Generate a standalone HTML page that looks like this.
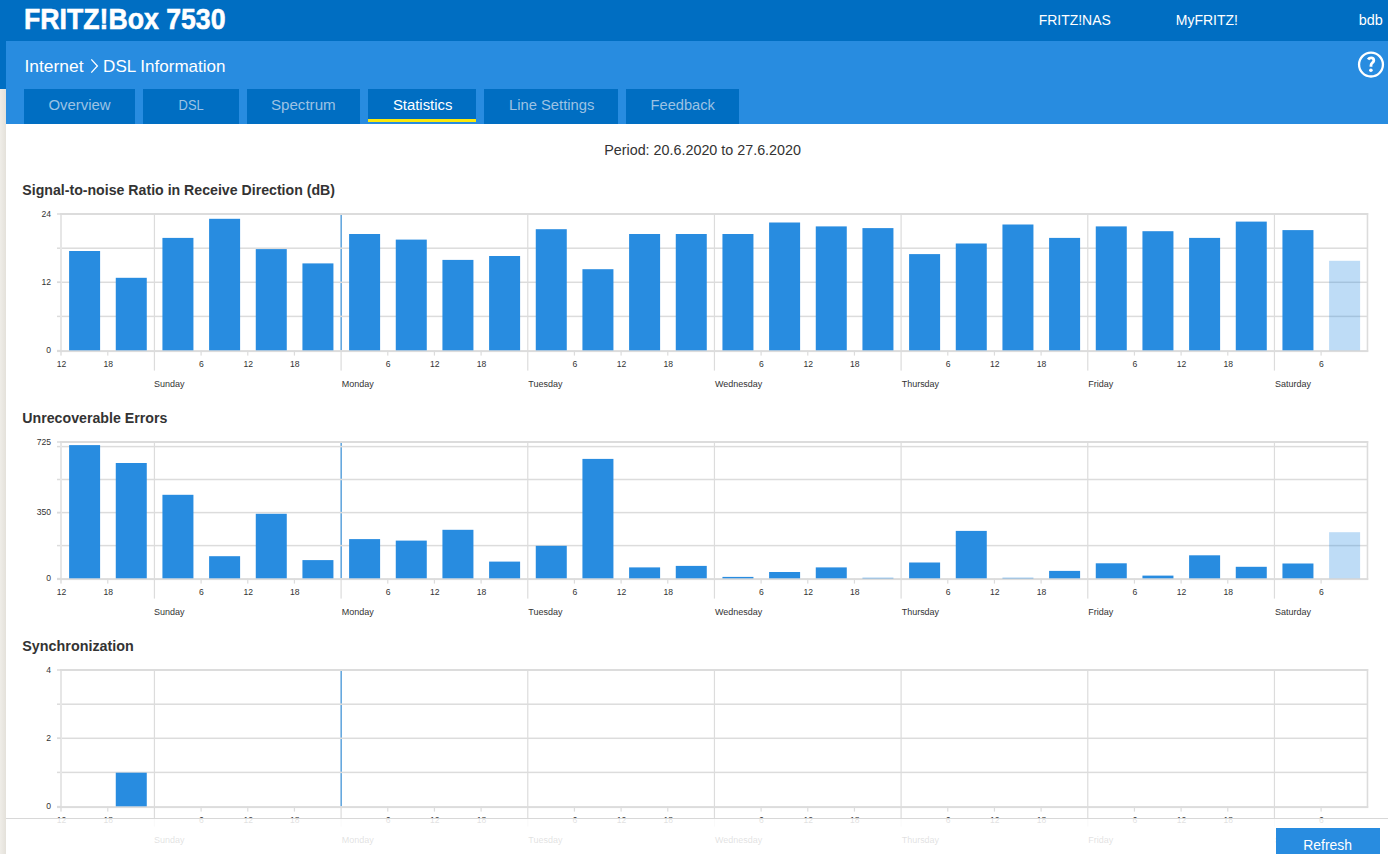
<!DOCTYPE html>
<html><head><meta charset="utf-8">
<style>
html,body{margin:0;padding:0;}
body{width:1388px;height:854px;overflow:hidden;position:relative;background:#fff;font-family:"Liberation Sans",sans-serif;}
.abs{position:absolute;}
svg text{font-family:"Liberation Sans",sans-serif;}
.ax{font-size:8.6px;fill:#333;}
.day{font-size:9.6px;fill:#333;}
</style></head><body>
<div class="abs" style="left:0;top:0;width:1388px;height:41px;background:#006ec2"></div>
<div class="abs" style="left:0;top:41px;width:6px;height:48px;background:#006ec2"></div>
<div class="abs" style="left:0;top:89px;width:6px;height:765px;background:linear-gradient(to right,#efede8,#e4e1da)"></div>
<div class="abs" style="left:6px;top:41px;width:1382px;height:83px;background:#288ce0"></div>
<div class="abs" style="left:24px;top:89px;width:111px;height:35px;background:#006ec2"></div>
<div class="abs" style="left:143px;top:89px;width:96px;height:35px;background:#006ec2"></div>
<div class="abs" style="left:247px;top:89px;width:113px;height:35px;background:#006ec2"></div>
<div class="abs" style="left:368px;top:89px;width:108px;height:30px;background:#006ec2"></div>
<div class="abs" style="left:368px;top:119px;width:108px;height:3px;background:#fbe80c"></div>
<div class="abs" style="left:484px;top:89px;width:134px;height:35px;background:#006ec2"></div>
<div class="abs" style="left:626px;top:89px;width:113px;height:35px;background:#006ec2"></div>
<svg class="abs" style="left:0;top:0" width="1388" height="854" viewBox="0 0 1388 854">
<g fill="#fff">
<text x="24" y="29" font-size="30.3" font-weight="bold" stroke="#fff" stroke-width="0.6" textLength="201.5" lengthAdjust="spacingAndGlyphs">FRITZ!Box 7530</text>
<text x="1038.7" y="24.8" font-size="15" textLength="72.1" lengthAdjust="spacingAndGlyphs">FRITZ!NAS</text>
<text x="1175.8" y="24.8" font-size="15" textLength="62.2" lengthAdjust="spacingAndGlyphs">MyFRITZ!</text>
<text x="1358.7" y="24.8" font-size="15" textLength="24" lengthAdjust="spacingAndGlyphs">bdb</text>
<text x="24.5" y="71.7" font-size="17" textLength="59" lengthAdjust="spacingAndGlyphs">Internet</text>
<text x="103.1" y="71.7" font-size="17" textLength="122.4" lengthAdjust="spacingAndGlyphs">DSL Information</text>
<text x="392.9" y="109.8" font-size="15.4" textLength="59.5" lengthAdjust="spacingAndGlyphs">Statistics</text>
</g>
<path d="M91.3 59.4 L97.4 66 L91.3 72.6" fill="none" stroke="#fff" stroke-width="1.3"/>
<circle cx="1371" cy="64.55" r="11.95" fill="none" stroke="#fff" stroke-width="2.3"/>
<path d="M1368.1,59.5 C1368.8,58.3 1369.9,57.8 1371.2,57.8 C1372.8,57.8 1373.8,58.8 1373.8,60.4 C1373.8,62.4 1371,63.2 1371,65.2 L1371,66.7" fill="none" stroke="#fff" stroke-width="2.8"/>
<circle cx="1370.9" cy="70.3" r="1.8" fill="#fff"/>
<g fill="#9cc2e4">
<text x="48.4" y="109.9" font-size="15.4" textLength="62.2" lengthAdjust="spacingAndGlyphs">Overview</text>
<text x="178.6" y="109.9" font-size="15.4" textLength="25.1" lengthAdjust="spacingAndGlyphs">DSL</text>
<text x="270.9" y="109.9" font-size="15.4" textLength="64.8" lengthAdjust="spacingAndGlyphs">Spectrum</text>
<text x="509" y="109.9" font-size="15.4" textLength="85.4" lengthAdjust="spacingAndGlyphs">Line Settings</text>
<text x="650.6" y="109.9" font-size="15.4" textLength="64.2" lengthAdjust="spacingAndGlyphs">Feedback</text>
</g>
<g fill="#333333">
<text x="604.2" y="154.7" font-size="14.5" textLength="196.8" lengthAdjust="spacingAndGlyphs">Period: 20.6.2020 to 27.6.2020</text>
<text x="22.3" y="194.7" font-size="15" font-weight="bold" textLength="312.7" lengthAdjust="spacingAndGlyphs">Signal-to-noise Ratio in Receive Direction (dB)</text>
<text x="22.3" y="422.9" font-size="15" font-weight="bold" textLength="145" lengthAdjust="spacingAndGlyphs">Unrecoverable Errors</text>
<text x="22.3" y="651" font-size="15" font-weight="bold" textLength="111.5" lengthAdjust="spacingAndGlyphs">Synchronization</text>
</g>
<rect x="340.40" y="214.00" width="1.6" height="136.60" fill="#66a8de"/>
<rect x="57.0" y="247.45" width="1310.67" height="1.5" fill="#dcdcdc"/>
<rect x="57.0" y="281.55" width="1310.67" height="1.5" fill="#dcdcdc"/>
<rect x="57.0" y="315.65" width="1310.67" height="1.5" fill="#dcdcdc"/>
<rect x="153.83" y="214.00" width="1.2" height="156.60" fill="#dcdcdc"/>
<rect x="340.50" y="350.60" width="1.2" height="20" fill="#dcdcdc"/>
<rect x="527.17" y="214.00" width="1.2" height="156.60" fill="#dcdcdc"/>
<rect x="713.84" y="214.00" width="1.2" height="156.60" fill="#dcdcdc"/>
<rect x="900.50" y="214.00" width="1.2" height="156.60" fill="#dcdcdc"/>
<rect x="1087.17" y="214.00" width="1.2" height="156.60" fill="#dcdcdc"/>
<rect x="1273.84" y="214.00" width="1.2" height="156.60" fill="#dcdcdc"/>
<rect x="107.17" y="350.60" width="1.2" height="5" fill="#dcdcdc"/>
<rect x="200.50" y="350.60" width="1.2" height="5" fill="#dcdcdc"/>
<rect x="247.17" y="350.60" width="1.2" height="5" fill="#dcdcdc"/>
<rect x="293.83" y="350.60" width="1.2" height="5" fill="#dcdcdc"/>
<rect x="387.17" y="350.60" width="1.2" height="5" fill="#dcdcdc"/>
<rect x="433.83" y="350.60" width="1.2" height="5" fill="#dcdcdc"/>
<rect x="480.50" y="350.60" width="1.2" height="5" fill="#dcdcdc"/>
<rect x="573.83" y="350.60" width="1.2" height="5" fill="#dcdcdc"/>
<rect x="620.50" y="350.60" width="1.2" height="5" fill="#dcdcdc"/>
<rect x="667.17" y="350.60" width="1.2" height="5" fill="#dcdcdc"/>
<rect x="760.50" y="350.60" width="1.2" height="5" fill="#dcdcdc"/>
<rect x="807.17" y="350.60" width="1.2" height="5" fill="#dcdcdc"/>
<rect x="853.84" y="350.60" width="1.2" height="5" fill="#dcdcdc"/>
<rect x="947.17" y="350.60" width="1.2" height="5" fill="#dcdcdc"/>
<rect x="993.84" y="350.60" width="1.2" height="5" fill="#dcdcdc"/>
<rect x="1040.50" y="350.60" width="1.2" height="5" fill="#dcdcdc"/>
<rect x="1133.84" y="350.60" width="1.2" height="5" fill="#dcdcdc"/>
<rect x="1180.50" y="350.60" width="1.2" height="5" fill="#dcdcdc"/>
<rect x="1227.17" y="350.60" width="1.2" height="5" fill="#dcdcdc"/>
<rect x="1320.50" y="350.60" width="1.2" height="5" fill="#dcdcdc"/>
<rect x="60.00" y="213.00" width="1308.17" height="2" fill="#dcdcdc"/>
<rect x="60.00" y="215.00" width="2" height="140.60" fill="#e6e6e6"/>
<rect x="1366.67" y="213.00" width="1.6" height="138.60" fill="#dcdcdc"/>
<rect x="57.00" y="350.10" width="1311.27" height="2" fill="#dcdcdc"/>
<rect x="57.00" y="213.25" width="4" height="1.5" fill="#dcdcdc"/>
<rect x="57.00" y="281.55" width="4" height="1.5" fill="#dcdcdc"/>
<rect x="57.00" y="349.85" width="4" height="1.5" fill="#dcdcdc"/>
<rect x="69.10" y="251.00" width="31" height="99.30" fill="#288ce0"/>
<rect x="115.77" y="277.80" width="31" height="72.50" fill="#288ce0"/>
<rect x="162.43" y="237.90" width="31" height="112.40" fill="#288ce0"/>
<rect x="209.10" y="218.80" width="31" height="131.50" fill="#288ce0"/>
<rect x="255.77" y="249.10" width="31" height="101.20" fill="#288ce0"/>
<rect x="302.43" y="263.40" width="31" height="86.90" fill="#288ce0"/>
<rect x="349.10" y="234.00" width="31" height="116.30" fill="#288ce0"/>
<rect x="395.77" y="239.60" width="31" height="110.70" fill="#288ce0"/>
<rect x="442.43" y="259.90" width="31" height="90.40" fill="#288ce0"/>
<rect x="489.10" y="256.00" width="31" height="94.30" fill="#288ce0"/>
<rect x="535.77" y="229.20" width="31" height="121.10" fill="#288ce0"/>
<rect x="582.43" y="269.20" width="31" height="81.10" fill="#288ce0"/>
<rect x="629.10" y="234.00" width="31" height="116.30" fill="#288ce0"/>
<rect x="675.77" y="234.00" width="31" height="116.30" fill="#288ce0"/>
<rect x="722.44" y="234.00" width="31" height="116.30" fill="#288ce0"/>
<rect x="769.10" y="222.50" width="31" height="127.80" fill="#288ce0"/>
<rect x="815.77" y="226.40" width="31" height="123.90" fill="#288ce0"/>
<rect x="862.44" y="228.10" width="31" height="122.20" fill="#288ce0"/>
<rect x="909.10" y="254.10" width="31" height="96.20" fill="#288ce0"/>
<rect x="955.77" y="243.50" width="31" height="106.80" fill="#288ce0"/>
<rect x="1002.44" y="224.50" width="31" height="125.80" fill="#288ce0"/>
<rect x="1049.10" y="237.90" width="31" height="112.40" fill="#288ce0"/>
<rect x="1095.77" y="226.40" width="31" height="123.90" fill="#288ce0"/>
<rect x="1142.44" y="231.20" width="31" height="119.10" fill="#288ce0"/>
<rect x="1189.10" y="237.90" width="31" height="112.40" fill="#288ce0"/>
<rect x="1235.77" y="221.60" width="31" height="128.70" fill="#288ce0"/>
<rect x="1282.44" y="230.10" width="31" height="120.20" fill="#288ce0"/>
<rect x="1329.10" y="260.80" width="31" height="89.50" fill="rgba(40,140,224,0.3)"/>
<text x="51" y="216.50" text-anchor="end" class="ax">24</text>
<text x="51" y="284.80" text-anchor="end" class="ax">12</text>
<text x="51" y="353.10" text-anchor="end" class="ax">0</text>
<text x="61.50" y="367.10" text-anchor="middle" class="ax">12</text>
<text x="108.17" y="367.10" text-anchor="middle" class="ax">18</text>
<text x="201.50" y="367.10" text-anchor="middle" class="ax">6</text>
<text x="248.17" y="367.10" text-anchor="middle" class="ax">12</text>
<text x="294.83" y="367.10" text-anchor="middle" class="ax">18</text>
<text x="388.17" y="367.10" text-anchor="middle" class="ax">6</text>
<text x="434.83" y="367.10" text-anchor="middle" class="ax">12</text>
<text x="481.50" y="367.10" text-anchor="middle" class="ax">18</text>
<text x="574.83" y="367.10" text-anchor="middle" class="ax">6</text>
<text x="621.50" y="367.10" text-anchor="middle" class="ax">12</text>
<text x="668.17" y="367.10" text-anchor="middle" class="ax">18</text>
<text x="761.50" y="367.10" text-anchor="middle" class="ax">6</text>
<text x="808.17" y="367.10" text-anchor="middle" class="ax">12</text>
<text x="854.84" y="367.10" text-anchor="middle" class="ax">18</text>
<text x="948.17" y="367.10" text-anchor="middle" class="ax">6</text>
<text x="994.84" y="367.10" text-anchor="middle" class="ax">12</text>
<text x="1041.50" y="367.10" text-anchor="middle" class="ax">18</text>
<text x="1134.84" y="367.10" text-anchor="middle" class="ax">6</text>
<text x="1181.50" y="367.10" text-anchor="middle" class="ax">12</text>
<text x="1228.17" y="367.10" text-anchor="middle" class="ax">18</text>
<text x="1321.50" y="367.10" text-anchor="middle" class="ax">6</text>
<text x="153.93" y="386.60" class="day" textLength="30.5" lengthAdjust="spacingAndGlyphs">Sunday</text>
<text x="341.70" y="386.60" class="day" textLength="32.0" lengthAdjust="spacingAndGlyphs">Monday</text>
<text x="528.37" y="386.60" class="day" textLength="34.1" lengthAdjust="spacingAndGlyphs">Tuesday</text>
<text x="715.04" y="386.60" class="day" textLength="47.2" lengthAdjust="spacingAndGlyphs">Wednesday</text>
<text x="901.70" y="386.60" class="day" textLength="37.4" lengthAdjust="spacingAndGlyphs">Thursday</text>
<text x="1088.37" y="386.60" class="day" textLength="25.0" lengthAdjust="spacingAndGlyphs">Friday</text>
<text x="1275.04" y="386.60" class="day" textLength="35.9" lengthAdjust="spacingAndGlyphs">Saturday</text>
<rect x="340.40" y="442.00" width="1.6" height="136.60" fill="#66a8de"/>
<rect x="57.0" y="445.85" width="1310.67" height="1.5" fill="#dcdcdc"/>
<rect x="57.0" y="478.75" width="1310.67" height="1.5" fill="#dcdcdc"/>
<rect x="57.0" y="511.85" width="1310.67" height="1.5" fill="#dcdcdc"/>
<rect x="57.0" y="544.85" width="1310.67" height="1.5" fill="#dcdcdc"/>
<rect x="153.83" y="442.00" width="1.2" height="156.60" fill="#dcdcdc"/>
<rect x="340.50" y="578.60" width="1.2" height="20" fill="#dcdcdc"/>
<rect x="527.17" y="442.00" width="1.2" height="156.60" fill="#dcdcdc"/>
<rect x="713.84" y="442.00" width="1.2" height="156.60" fill="#dcdcdc"/>
<rect x="900.50" y="442.00" width="1.2" height="156.60" fill="#dcdcdc"/>
<rect x="1087.17" y="442.00" width="1.2" height="156.60" fill="#dcdcdc"/>
<rect x="1273.84" y="442.00" width="1.2" height="156.60" fill="#dcdcdc"/>
<rect x="107.17" y="578.60" width="1.2" height="5" fill="#dcdcdc"/>
<rect x="200.50" y="578.60" width="1.2" height="5" fill="#dcdcdc"/>
<rect x="247.17" y="578.60" width="1.2" height="5" fill="#dcdcdc"/>
<rect x="293.83" y="578.60" width="1.2" height="5" fill="#dcdcdc"/>
<rect x="387.17" y="578.60" width="1.2" height="5" fill="#dcdcdc"/>
<rect x="433.83" y="578.60" width="1.2" height="5" fill="#dcdcdc"/>
<rect x="480.50" y="578.60" width="1.2" height="5" fill="#dcdcdc"/>
<rect x="573.83" y="578.60" width="1.2" height="5" fill="#dcdcdc"/>
<rect x="620.50" y="578.60" width="1.2" height="5" fill="#dcdcdc"/>
<rect x="667.17" y="578.60" width="1.2" height="5" fill="#dcdcdc"/>
<rect x="760.50" y="578.60" width="1.2" height="5" fill="#dcdcdc"/>
<rect x="807.17" y="578.60" width="1.2" height="5" fill="#dcdcdc"/>
<rect x="853.84" y="578.60" width="1.2" height="5" fill="#dcdcdc"/>
<rect x="947.17" y="578.60" width="1.2" height="5" fill="#dcdcdc"/>
<rect x="993.84" y="578.60" width="1.2" height="5" fill="#dcdcdc"/>
<rect x="1040.50" y="578.60" width="1.2" height="5" fill="#dcdcdc"/>
<rect x="1133.84" y="578.60" width="1.2" height="5" fill="#dcdcdc"/>
<rect x="1180.50" y="578.60" width="1.2" height="5" fill="#dcdcdc"/>
<rect x="1227.17" y="578.60" width="1.2" height="5" fill="#dcdcdc"/>
<rect x="1320.50" y="578.60" width="1.2" height="5" fill="#dcdcdc"/>
<rect x="60.00" y="441.00" width="1308.17" height="2" fill="#dcdcdc"/>
<rect x="60.00" y="443.00" width="2" height="140.60" fill="#e6e6e6"/>
<rect x="1366.67" y="441.00" width="1.6" height="138.60" fill="#dcdcdc"/>
<rect x="57.00" y="578.10" width="1311.27" height="2" fill="#dcdcdc"/>
<rect x="57.00" y="441.25" width="4" height="1.5" fill="#dcdcdc"/>
<rect x="57.00" y="511.85" width="4" height="1.5" fill="#dcdcdc"/>
<rect x="57.00" y="577.85" width="4" height="1.5" fill="#dcdcdc"/>
<rect x="69.10" y="445.10" width="31" height="133.20" fill="#288ce0"/>
<rect x="115.77" y="463.00" width="31" height="115.30" fill="#288ce0"/>
<rect x="162.43" y="494.80" width="31" height="83.50" fill="#288ce0"/>
<rect x="209.10" y="556.20" width="31" height="22.10" fill="#288ce0"/>
<rect x="255.77" y="513.80" width="31" height="64.50" fill="#288ce0"/>
<rect x="302.43" y="560.10" width="31" height="18.20" fill="#288ce0"/>
<rect x="349.10" y="539.10" width="31" height="39.20" fill="#288ce0"/>
<rect x="395.77" y="540.60" width="31" height="37.70" fill="#288ce0"/>
<rect x="442.43" y="529.80" width="31" height="48.50" fill="#288ce0"/>
<rect x="489.10" y="561.60" width="31" height="16.70" fill="#288ce0"/>
<rect x="535.77" y="545.80" width="31" height="32.50" fill="#288ce0"/>
<rect x="582.43" y="458.90" width="31" height="119.40" fill="#288ce0"/>
<rect x="629.10" y="567.40" width="31" height="10.90" fill="#288ce0"/>
<rect x="675.77" y="565.90" width="31" height="12.40" fill="#288ce0"/>
<rect x="722.44" y="576.90" width="31" height="1.40" fill="#288ce0"/>
<rect x="769.10" y="572.00" width="31" height="6.30" fill="#288ce0"/>
<rect x="815.77" y="567.40" width="31" height="10.90" fill="#288ce0"/>
<rect x="862.44" y="577.80" width="31" height="0.50" fill="#288ce0"/>
<rect x="909.10" y="562.50" width="31" height="15.80" fill="#288ce0"/>
<rect x="955.77" y="530.90" width="31" height="47.40" fill="#288ce0"/>
<rect x="1002.44" y="577.80" width="31" height="0.50" fill="#288ce0"/>
<rect x="1049.10" y="570.90" width="31" height="7.40" fill="#288ce0"/>
<rect x="1095.77" y="563.30" width="31" height="15.00" fill="#288ce0"/>
<rect x="1142.44" y="575.60" width="31" height="2.70" fill="#288ce0"/>
<rect x="1189.10" y="555.30" width="31" height="23.00" fill="#288ce0"/>
<rect x="1235.77" y="566.80" width="31" height="11.50" fill="#288ce0"/>
<rect x="1282.44" y="563.50" width="31" height="14.80" fill="#288ce0"/>
<rect x="1329.10" y="532.20" width="31" height="46.10" fill="rgba(40,140,224,0.3)"/>
<text x="51" y="444.50" text-anchor="end" class="ax">725</text>
<text x="51" y="515.10" text-anchor="end" class="ax">350</text>
<text x="51" y="581.10" text-anchor="end" class="ax">0</text>
<text x="61.50" y="595.10" text-anchor="middle" class="ax">12</text>
<text x="108.17" y="595.10" text-anchor="middle" class="ax">18</text>
<text x="201.50" y="595.10" text-anchor="middle" class="ax">6</text>
<text x="248.17" y="595.10" text-anchor="middle" class="ax">12</text>
<text x="294.83" y="595.10" text-anchor="middle" class="ax">18</text>
<text x="388.17" y="595.10" text-anchor="middle" class="ax">6</text>
<text x="434.83" y="595.10" text-anchor="middle" class="ax">12</text>
<text x="481.50" y="595.10" text-anchor="middle" class="ax">18</text>
<text x="574.83" y="595.10" text-anchor="middle" class="ax">6</text>
<text x="621.50" y="595.10" text-anchor="middle" class="ax">12</text>
<text x="668.17" y="595.10" text-anchor="middle" class="ax">18</text>
<text x="761.50" y="595.10" text-anchor="middle" class="ax">6</text>
<text x="808.17" y="595.10" text-anchor="middle" class="ax">12</text>
<text x="854.84" y="595.10" text-anchor="middle" class="ax">18</text>
<text x="948.17" y="595.10" text-anchor="middle" class="ax">6</text>
<text x="994.84" y="595.10" text-anchor="middle" class="ax">12</text>
<text x="1041.50" y="595.10" text-anchor="middle" class="ax">18</text>
<text x="1134.84" y="595.10" text-anchor="middle" class="ax">6</text>
<text x="1181.50" y="595.10" text-anchor="middle" class="ax">12</text>
<text x="1228.17" y="595.10" text-anchor="middle" class="ax">18</text>
<text x="1321.50" y="595.10" text-anchor="middle" class="ax">6</text>
<text x="153.93" y="614.60" class="day" textLength="30.5" lengthAdjust="spacingAndGlyphs">Sunday</text>
<text x="341.70" y="614.60" class="day" textLength="32.0" lengthAdjust="spacingAndGlyphs">Monday</text>
<text x="528.37" y="614.60" class="day" textLength="34.1" lengthAdjust="spacingAndGlyphs">Tuesday</text>
<text x="715.04" y="614.60" class="day" textLength="47.2" lengthAdjust="spacingAndGlyphs">Wednesday</text>
<text x="901.70" y="614.60" class="day" textLength="37.4" lengthAdjust="spacingAndGlyphs">Thursday</text>
<text x="1088.37" y="614.60" class="day" textLength="25.0" lengthAdjust="spacingAndGlyphs">Friday</text>
<text x="1275.04" y="614.60" class="day" textLength="35.9" lengthAdjust="spacingAndGlyphs">Saturday</text>
<rect x="340.40" y="670.00" width="1.6" height="136.60" fill="#66a8de"/>
<rect x="57.0" y="703.45" width="1310.67" height="1.5" fill="#dcdcdc"/>
<rect x="57.0" y="737.55" width="1310.67" height="1.5" fill="#dcdcdc"/>
<rect x="57.0" y="771.65" width="1310.67" height="1.5" fill="#dcdcdc"/>
<rect x="153.83" y="670.00" width="1.2" height="156.60" fill="#dcdcdc"/>
<rect x="340.50" y="806.60" width="1.2" height="20" fill="#dcdcdc"/>
<rect x="527.17" y="670.00" width="1.2" height="156.60" fill="#dcdcdc"/>
<rect x="713.84" y="670.00" width="1.2" height="156.60" fill="#dcdcdc"/>
<rect x="900.50" y="670.00" width="1.2" height="156.60" fill="#dcdcdc"/>
<rect x="1087.17" y="670.00" width="1.2" height="156.60" fill="#dcdcdc"/>
<rect x="1273.84" y="670.00" width="1.2" height="156.60" fill="#dcdcdc"/>
<rect x="107.17" y="806.60" width="1.2" height="5" fill="#dcdcdc"/>
<rect x="200.50" y="806.60" width="1.2" height="5" fill="#dcdcdc"/>
<rect x="247.17" y="806.60" width="1.2" height="5" fill="#dcdcdc"/>
<rect x="293.83" y="806.60" width="1.2" height="5" fill="#dcdcdc"/>
<rect x="387.17" y="806.60" width="1.2" height="5" fill="#dcdcdc"/>
<rect x="433.83" y="806.60" width="1.2" height="5" fill="#dcdcdc"/>
<rect x="480.50" y="806.60" width="1.2" height="5" fill="#dcdcdc"/>
<rect x="573.83" y="806.60" width="1.2" height="5" fill="#dcdcdc"/>
<rect x="620.50" y="806.60" width="1.2" height="5" fill="#dcdcdc"/>
<rect x="667.17" y="806.60" width="1.2" height="5" fill="#dcdcdc"/>
<rect x="760.50" y="806.60" width="1.2" height="5" fill="#dcdcdc"/>
<rect x="807.17" y="806.60" width="1.2" height="5" fill="#dcdcdc"/>
<rect x="853.84" y="806.60" width="1.2" height="5" fill="#dcdcdc"/>
<rect x="947.17" y="806.60" width="1.2" height="5" fill="#dcdcdc"/>
<rect x="993.84" y="806.60" width="1.2" height="5" fill="#dcdcdc"/>
<rect x="1040.50" y="806.60" width="1.2" height="5" fill="#dcdcdc"/>
<rect x="1133.84" y="806.60" width="1.2" height="5" fill="#dcdcdc"/>
<rect x="1180.50" y="806.60" width="1.2" height="5" fill="#dcdcdc"/>
<rect x="1227.17" y="806.60" width="1.2" height="5" fill="#dcdcdc"/>
<rect x="1320.50" y="806.60" width="1.2" height="5" fill="#dcdcdc"/>
<rect x="60.00" y="669.00" width="1308.17" height="2" fill="#dcdcdc"/>
<rect x="60.00" y="671.00" width="2" height="140.60" fill="#e6e6e6"/>
<rect x="1366.67" y="669.00" width="1.6" height="138.60" fill="#dcdcdc"/>
<rect x="57.00" y="806.10" width="1311.27" height="2" fill="#dcdcdc"/>
<rect x="57.00" y="669.25" width="4" height="1.5" fill="#dcdcdc"/>
<rect x="57.00" y="737.55" width="4" height="1.5" fill="#dcdcdc"/>
<rect x="57.00" y="805.85" width="4" height="1.5" fill="#dcdcdc"/>
<rect x="115.77" y="772.70" width="31" height="33.60" fill="#288ce0"/>
<text x="51" y="672.50" text-anchor="end" class="ax">4</text>
<text x="51" y="740.80" text-anchor="end" class="ax">2</text>
<text x="51" y="809.10" text-anchor="end" class="ax">0</text>
<text x="61.50" y="823.10" text-anchor="middle" class="ax">12</text>
<text x="108.17" y="823.10" text-anchor="middle" class="ax">18</text>
<text x="201.50" y="823.10" text-anchor="middle" class="ax">6</text>
<text x="248.17" y="823.10" text-anchor="middle" class="ax">12</text>
<text x="294.83" y="823.10" text-anchor="middle" class="ax">18</text>
<text x="388.17" y="823.10" text-anchor="middle" class="ax">6</text>
<text x="434.83" y="823.10" text-anchor="middle" class="ax">12</text>
<text x="481.50" y="823.10" text-anchor="middle" class="ax">18</text>
<text x="574.83" y="823.10" text-anchor="middle" class="ax">6</text>
<text x="621.50" y="823.10" text-anchor="middle" class="ax">12</text>
<text x="668.17" y="823.10" text-anchor="middle" class="ax">18</text>
<text x="761.50" y="823.10" text-anchor="middle" class="ax">6</text>
<text x="808.17" y="823.10" text-anchor="middle" class="ax">12</text>
<text x="854.84" y="823.10" text-anchor="middle" class="ax">18</text>
<text x="948.17" y="823.10" text-anchor="middle" class="ax">6</text>
<text x="994.84" y="823.10" text-anchor="middle" class="ax">12</text>
<text x="1041.50" y="823.10" text-anchor="middle" class="ax">18</text>
<text x="1134.84" y="823.10" text-anchor="middle" class="ax">6</text>
<text x="1181.50" y="823.10" text-anchor="middle" class="ax">12</text>
<text x="1228.17" y="823.10" text-anchor="middle" class="ax">18</text>
<text x="1321.50" y="823.10" text-anchor="middle" class="ax">6</text>
<text x="153.93" y="842.60" class="day" textLength="30.5" lengthAdjust="spacingAndGlyphs">Sunday</text>
<text x="341.70" y="842.60" class="day" textLength="32.0" lengthAdjust="spacingAndGlyphs">Monday</text>
<text x="528.37" y="842.60" class="day" textLength="34.1" lengthAdjust="spacingAndGlyphs">Tuesday</text>
<text x="715.04" y="842.60" class="day" textLength="47.2" lengthAdjust="spacingAndGlyphs">Wednesday</text>
<text x="901.70" y="842.60" class="day" textLength="37.4" lengthAdjust="spacingAndGlyphs">Thursday</text>
<text x="1088.37" y="842.60" class="day" textLength="25.0" lengthAdjust="spacingAndGlyphs">Friday</text>
<text x="1275.04" y="842.60" class="day" textLength="35.9" lengthAdjust="spacingAndGlyphs">Saturday</text>
</svg>
<div class="abs" style="left:6px;top:818px;width:1382px;height:36px;background:rgba(255,255,255,0.85);border-top:1px solid #d8d8d8"></div>
<div class="abs" style="left:1276px;top:828px;width:104px;height:26px;background:#288ce0"></div>
<svg class="abs" style="left:0;top:0" width="1388" height="854"><text x="1303.3" y="849.6" font-size="14.9" fill="#fff" textLength="48.7" lengthAdjust="spacingAndGlyphs">Refresh</text></svg>
</body></html>
